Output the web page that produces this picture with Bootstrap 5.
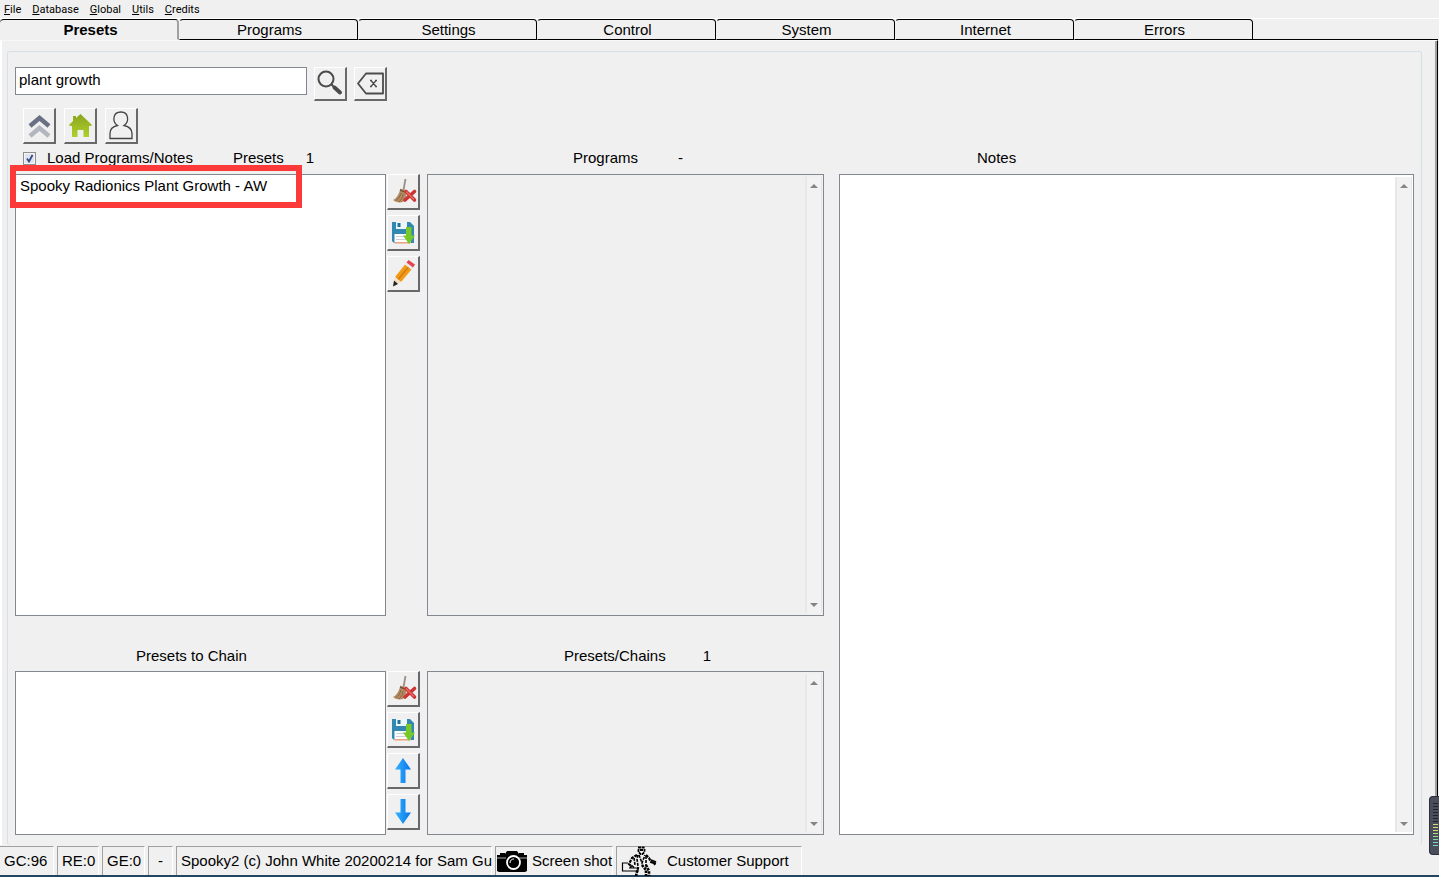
<!DOCTYPE html>
<html lang="en">
<head>
<meta charset="utf-8">
<meta name="viewport" content="width=device-width, initial-scale=1">
<title>Spooky2</title>
<link href="https://cdn.jsdelivr.net/npm/bootstrap@5.3.0/dist/css/bootstrap.min.css" rel="stylesheet">
<style>
  body { background: #f0f0f0; color: #000; font-family: "Liberation Sans", Arial, sans-serif; font-size: 15px; line-height: 20px; }
  a { color: inherit; text-decoration: none; }
  .menu-bar { height: 19px; gap: 11px; padding-left: 4px; border-bottom: 1px solid #fff; font: 11px/19px Roboto, "Noto Sans", sans-serif; }
  .menu-bar a::first-letter { text-decoration: underline; }

  .tab-strip { height: 21px; }
  .tab-item { flex: 0 1 179px; height: 21px; padding: 0 0 0 2px; border: 1px solid #000; border-left-color: transparent; border-top-left-radius: 4px; border-top-right-radius: 4px; background: #f0f0f0; line-height: 20px; }
  .tab-item.active { border-right: 2px solid #a0a0a0; border-left: 0; border-bottom-color: transparent; padding-left: 4px; font-weight: bold; }
  .tab-rest { border-bottom: 1px solid #000; margin-right: 1px; }
  .tab-page { border-top: 1px solid #f8f8f8; border-left: 2px solid #fff; border-right: 1px solid #000; margin-right: 1px; padding: 10px 15px 0 5px; box-shadow: inset -2px 0 #a0a0a0; }
  .frame-box { border: 1px solid #d5dfe5; border-bottom: 0; border-radius: 3px; padding: 15px 7px 10px; }

  .search-box { width: 292px; height: 28px; padding: 0 3px 4px; border: 1px solid #828790; background: #fff; }
  .tool-btn { width: 33px; height: 36px; padding: 0; background: #f0f0f0; border: solid; border-width: 1px 2px 2px 1px; border-color: #fff #696969 #696969 #fff; display: flex; align-items: center; justify-content: center; }
  .search-row { gap: 7px; }
  .search-row .tool-btn { height: 34px; }
  .nav-row { gap: 8px; margin: 7px 0 0 8px; }
  .tool-btn svg { width: 30px; height: 30px; display: block; }
  .stack { gap: 5px; margin-left: 1px; }

  .caption-row { height: 30px; padding-bottom: 2px; }
  .caption-row.second { margin-top: 25px; padding-bottom: 0; }
  .check { appearance: none; width: 13px; height: 13px; border: 1px solid #8e8f8f; outline: 1px solid #f4f4f4; outline-offset: -2px; margin: 0 11px 0 8px; background: #dde3ee; }
  .check:checked { background: #dfe5ef url("data:image/svg+xml,%3Csvg xmlns='http://www.w3.org/2000/svg' viewBox='0 0 11 11'%3E%3Cpath d='M3 5.5 5 8.5 8.5 2' fill='none' stroke='%23344a8c' stroke-width='1.8'/%3E%3C/svg%3E"); }
  .col-presets { flex: 405 1 0; }
  .col-programs { flex: 397 1 0; margin-left: 7px; }
  .col-notes { flex: 575 1 0; margin-left: 15px; }
  .lower { height: 164px; }
  .pane { border: 1px solid #828790; background: #fff; }
  .pane.off { background: #f0f0f0; }
  .pane select, .pane textarea { border: 0; outline: 0; background: transparent; resize: none; padding: 2px 2px 0; overflow: hidden; width: 100%; height: 100%; color: #000; }
  .pane option { padding: 0 2px; line-height: 20px; min-height: 20px; }
  .scroll-track { flex: 0 0 17px; margin: 2px 1px; padding: 6px 0; background: #f2f2f2; border-left: 2px solid #e8e8e8; border-right: 1px solid #e6e6e6; display: flex; flex-direction: column; justify-content: space-between; align-items: center; }
  .scroll-track i { border: 4px solid transparent; border-top-width: 0; border-bottom-color: #858585; margin-top: 1px; }
  .scroll-track i + i { border-top: 4px solid #858585; border-bottom: 0; margin: 0; }
  .marker { position: absolute; left: -6px; top: -10px; width: 292px; height: 43px; border: 6px solid #fd3a3a; pointer-events: none; }

  .status-bar { height: 32px; padding-top: 1px; gap: 3px; border-bottom: 2px solid #24455f; white-space: nowrap; }
  .status-cell { border: 1px solid #a0a0a0; border-width: 1px 1px 0; border-right-color: #fff; padding: 0 0 0 4px; display: flex; align-items: center; background: #f0f0f0; color: #000; }
  .status-cell:first-child { border-left: 0; }
  .meter { position: absolute; right: 0; bottom: 22px; width: 10px; height: 59px; background: #4a4d5c; border: 1px solid #2c2e3a; border-right: 0; border-radius: 4px 0 0 4px; padding: 6px 1px 6px 3px; }
  .meter span { display: block; height: 45px; background: repeating-linear-gradient(transparent 0 1px, #4a4d5c 1px 3px), linear-gradient(#22242d 0 19px, #d8d86a 19px 27px, #7fe0a0 36px, #70d8c8); }
</style>
</head>
<body>
<svg width="0" height="0" class="position-absolute" aria-hidden="true">
  <defs>
    <linearGradient id="blue"><stop offset="0" stop-color="#35b5ff"/><stop offset="1" stop-color="#0873e8"/></linearGradient>
    <linearGradient id="leaf" x2="0" y2="1"><stop offset="0" stop-color="#8aa51c"/><stop offset="1" stop-color="#afd02e"/></linearGradient>
  </defs>
  <symbol id="broom" viewBox="0 0 30 30">
    <path d="M17.500 2 15.500 13" stroke="#9c8f86" stroke-width="1.800" fill="none"/>
    <path d="M12.500 11.500 18 14c1 3 0 7-3 11-4 1-8 0-10-2 4-2 6-6 7.500-11.500z" fill="#b28b62"/>
    <path d="m12 13 5 2" stroke="#74543c" stroke-width="1.500"/>
    <path d="M13 16c-1 4-3 6-5 7.500M15 17c0 3-2 6-4 8" stroke="#8c6645" fill="none"/>
    <path d="m18 14.500 8.500 8.500M26.500 14.500l-9.500 8.500" stroke="#cd3535" stroke-width="3.600" stroke-linecap="round"/>
    <path d="m18 14.500 8 8" stroke="#ef6b63" stroke-width="1.200"/>
  </symbol>
  <symbol id="disk" viewBox="0 0 30 30">
    <path d="M4 4h18l4 4v17H6l-2-2z" fill="#3288b1"/>
    <path d="M8 4h11v7H8z" fill="#edf6fa"/><path d="M9.500 5h3v4h-3z" fill="#20719b"/>
    <path d="M6.500 16h16v9h-16z" fill="#fff"/><path d="M8 18.500h12M8 21.500h12" stroke="#c9d1d6"/><path d="M6.500 24h16v1.500h-16z" fill="#e8a27a"/>
    <path d="M18 9h5.500v8.500H27L21 26l-6-8.500h3z" fill="#76c928"/>
  </symbol>
  <symbol id="arrow" viewBox="0 0 30 30"><path d="m15 2 8 11.500h-5.500V27h-5V13.500H7z" fill="url(#blue)"/></symbol>
</svg>

<div class="d-flex flex-column min-vh-100 position-relative">
  <nav class="menu-bar d-flex" aria-label="Main menu">
    <a class="d-block" href="#">File</a><a class="d-block" href="#">Database</a><a class="d-block" href="#">Global</a><a class="d-block" href="#">Utils</a><a class="d-block" href="#">Credits</a>
  </nav>

  <div class="tab-strip d-flex" role="tablist">
    <button class="tab-item active" role="tab" aria-selected="true">Presets</button>
    <button class="tab-item" role="tab">Programs</button>
    <button class="tab-item" role="tab">Settings</button>
    <button class="tab-item" role="tab">Control</button>
    <button class="tab-item" role="tab">System</button>
    <button class="tab-item" role="tab">Internet</button>
    <button class="tab-item" role="tab">Errors</button>
    <div class="tab-rest flex-grow-1"></div>
  </div>

  <main class="tab-page flex-grow-1 d-flex flex-column">
    <div class="frame-box flex-grow-1 d-flex flex-column">
      <div class="search-row d-flex align-items-start">
        <input class="search-box" type="text" value="plant growth" aria-label="Search presets">
        <button class="tool-btn" aria-label="Search"><svg viewBox="0 0 30 30"><circle cx="11" cy="10" r="7.500" fill="none" stroke="#4b4b4b" stroke-width="2"/><path d="m16.500 15.500 3 3" stroke="#4b4b4b" stroke-width="2"/><path d="m19.500 18.500 5.500 5" stroke="#4b4b4b" stroke-width="4" stroke-linecap="round"/></svg></button>
        <button class="tool-btn" aria-label="Clear search"><svg viewBox="0 0 30 30"><path d="M11 4.500h17v20H11l-8-10z" fill="none" stroke="#4b4b4b" stroke-width="1.800" stroke-linejoin="round"/><path d="m16 11.500 5 6m0-6-5 6M15 11.500h2m3 0h2m-7 6h2m3 0h2" stroke="#4b4b4b" stroke-width="1.300"/></svg></button>
      </div>
      <div class="nav-row d-flex">
        <button class="tool-btn" aria-label="Up one level"><svg viewBox="0 0 30 30"><path d="m6 25 9.500-8 9.500 8" fill="none" stroke="#b4b6bf" stroke-width="4.500"/><path d="m6 15 9.500-8 9.500 8" fill="none" stroke="#697084" stroke-width="4.500"/></svg></button>
        <button class="tool-btn" aria-label="Home"><svg viewBox="0 0 30 30"><path d="M15.500 3 27 14l-1 1h-2v11h-5.500v-7h-6v7H7V15H5l-1-1 4-4V5h3v2z" fill="url(#leaf)"/></svg></button>
        <button class="tool-btn" aria-label="User"><svg viewBox="0 0 30 30"><path d="M4 27.500v-5c0-5 3-7 7.500-8-3-2-4-5-3.500-8C8.500 2.500 12 1 15 1s6 1.500 6.500 5.500c.500 3-.500 6-3.500 8 4.500 1 8 3 8 8v5z" fill="none" stroke="#444" stroke-width="1.300"/></svg></button>
      </div>

      <div class="d-flex flex-grow-1">
        <section class="col-presets d-flex flex-column">
          <div class="caption-row d-flex align-items-center">
            <input class="check" type="checkbox" id="loadNotes" checked>
            <label for="loadNotes">Load Programs/Notes</label>
            <label for="presetList" style="margin-left:40px">Presets</label><span style="margin-left:22px">1</span>
          </div>
          <div class="d-flex flex-grow-1">
            <div class="pane flex-grow-1 position-relative">
              <select id="presetList" size="4"><option>Spooky Radionics Plant Growth - AW</option></select>
              <div class="marker"></div>
            </div>
            <div class="stack d-flex flex-column">
              <button class="tool-btn" aria-label="Clear preset"><svg><use href="#broom"/></svg></button>
              <button class="tool-btn" aria-label="Save preset"><svg><use href="#disk"/></svg></button>
              <button class="tool-btn" aria-label="Edit preset"><svg viewBox="0 0 30 30"><path d="m7 18 10-12.500 6.500 5L13 23z" fill="#f29a16"/><path d="m10 20.500 10.500-12.500" stroke="#c97a12" stroke-width="1.200"/><path d="m7 18 6 5-7 3.500z" fill="#f6dfc0"/><path d="m6 21.500 4 3.500-5 2.500z" fill="#222"/><path d="m17 5.500 1.500-2 6.500 5-1.500 2z" fill="#e9e9e9"/><path d="m18.500 3.500 2-2.500 6.500 4.500-2 3z" fill="#e3444d"/></svg></button>
            </div>
          </div>
          <div class="caption-row second d-flex align-items-center" style="padding-left:121px"><label for="chainList">Presets to Chain</label></div>
          <div class="lower d-flex">
            <div class="pane flex-grow-1"><select id="chainList" size="4"></select></div>
            <div class="stack d-flex flex-column">
              <button class="tool-btn" aria-label="Clear chain"><svg><use href="#broom"/></svg></button>
              <button class="tool-btn" aria-label="Save chain"><svg><use href="#disk"/></svg></button>
              <button class="tool-btn" aria-label="Move up"><svg><use href="#arrow"/></svg></button>
              <button class="tool-btn" aria-label="Move down"><svg viewBox="0 0 30 30"><path d="m15 27 8-11.500h-5.500V2h-5v13.500H7z" fill="url(#blue)"/></svg></button>
            </div>
          </div>
        </section>

        <section class="col-programs d-flex flex-column">
          <div class="caption-row d-flex align-items-center" style="padding-left:146px"><label for="programList">Programs</label><span style="margin-left:40px">-</span></div>
          <div class="pane off flex-grow-1 d-flex"><select id="programList" size="4"></select><div class="scroll-track"><i></i><i></i></div></div>
          <div class="caption-row second d-flex align-items-center" style="padding-left:137px"><label for="chains">Presets/Chains</label><span style="margin-left:37px">1</span></div>
          <div class="pane off lower d-flex"><select id="chains" size="4"></select><div class="scroll-track"><i></i><i></i></div></div>
        </section>

        <section class="col-notes d-flex flex-column">
          <div class="caption-row d-flex align-items-center" style="padding-left:138px"><label for="notes">Notes</label></div>
          <div class="pane flex-grow-1 d-flex"><textarea id="notes"></textarea><div class="scroll-track"><i></i><i></i></div></div>
        </section>
      </div>
    </div>
  </main>

  <footer class="status-bar d-flex">
    <div class="status-cell" style="width:54px">GC:96</div>
    <div class="status-cell" style="width:42px">RE:0</div>
    <div class="status-cell" style="width:43px">GE:0</div>
    <div class="status-cell justify-content-center p-0" style="width:25px">-</div>
    <div class="status-cell" style="width:316px">Spooky2 (c) John White 20200214 for Sam Gu</div>
    <button class="status-cell p-0" style="width:118px"><svg width="32" height="24" viewBox="0 0 32 24" class="flex-shrink-0"><path d="M1 6h3V4h5v1l2-3h10l2 3V4h5v2h3v16l-2 1H3l-2-1z"/><path d="M1 9h9m13 0h8" stroke="#aaa"/><circle cx="17.500" cy="13.500" r="6.500" fill="none" stroke="#fff" stroke-width="1.800"/><path d="M14 14c0-3 2-4 4-4" stroke="#fff" fill="none"/></svg><span class="ms-1">Screen shot</span></button>
    <button class="status-cell" style="width:186px"><svg width="38" height="30" viewBox="0 0 38 30" class="me-2 flex-shrink-0" fill="none" stroke="#000" stroke-width="1.500">
      <path d="M17 1.500h7M17.500 3v3l2 2h2l2-2V3M19 4h4" stroke-dasharray="3 .6" stroke-width="1.800"/>
      <path d="m16 9-5 3-3 6 3 3M25 9l3 3 2 4 5 1.500" stroke-width="2.200" stroke-dasharray="3 1"/>
      <path d="m17 9-1 4 1 7M25 10v10M18 9l3 8 3-8M13 12l1 7" stroke-width="1.600" stroke-dasharray="3 1"/>
      <path d="m17 21-2 9M21 19l4 5v6M25 19l3 6v5" stroke-width="2.600" stroke-dasharray="2.500 1"/>
      <path d="M7 17H1.500v8H17v-4M8 22h7M9 21.500l2-2 2 2" stroke-width="1.200"/>
      <path d="m30 14 5 2m-3 0 2 3" stroke-width="1.600"/></svg><span>Customer Support</span></button>
  </footer>
  <div class="meter" aria-hidden="true"><span></span></div>
</div>
<script src="https://cdn.jsdelivr.net/npm/bootstrap@5.3.0/dist/js/bootstrap.bundle.min.js"></script>
</body>
</html>
